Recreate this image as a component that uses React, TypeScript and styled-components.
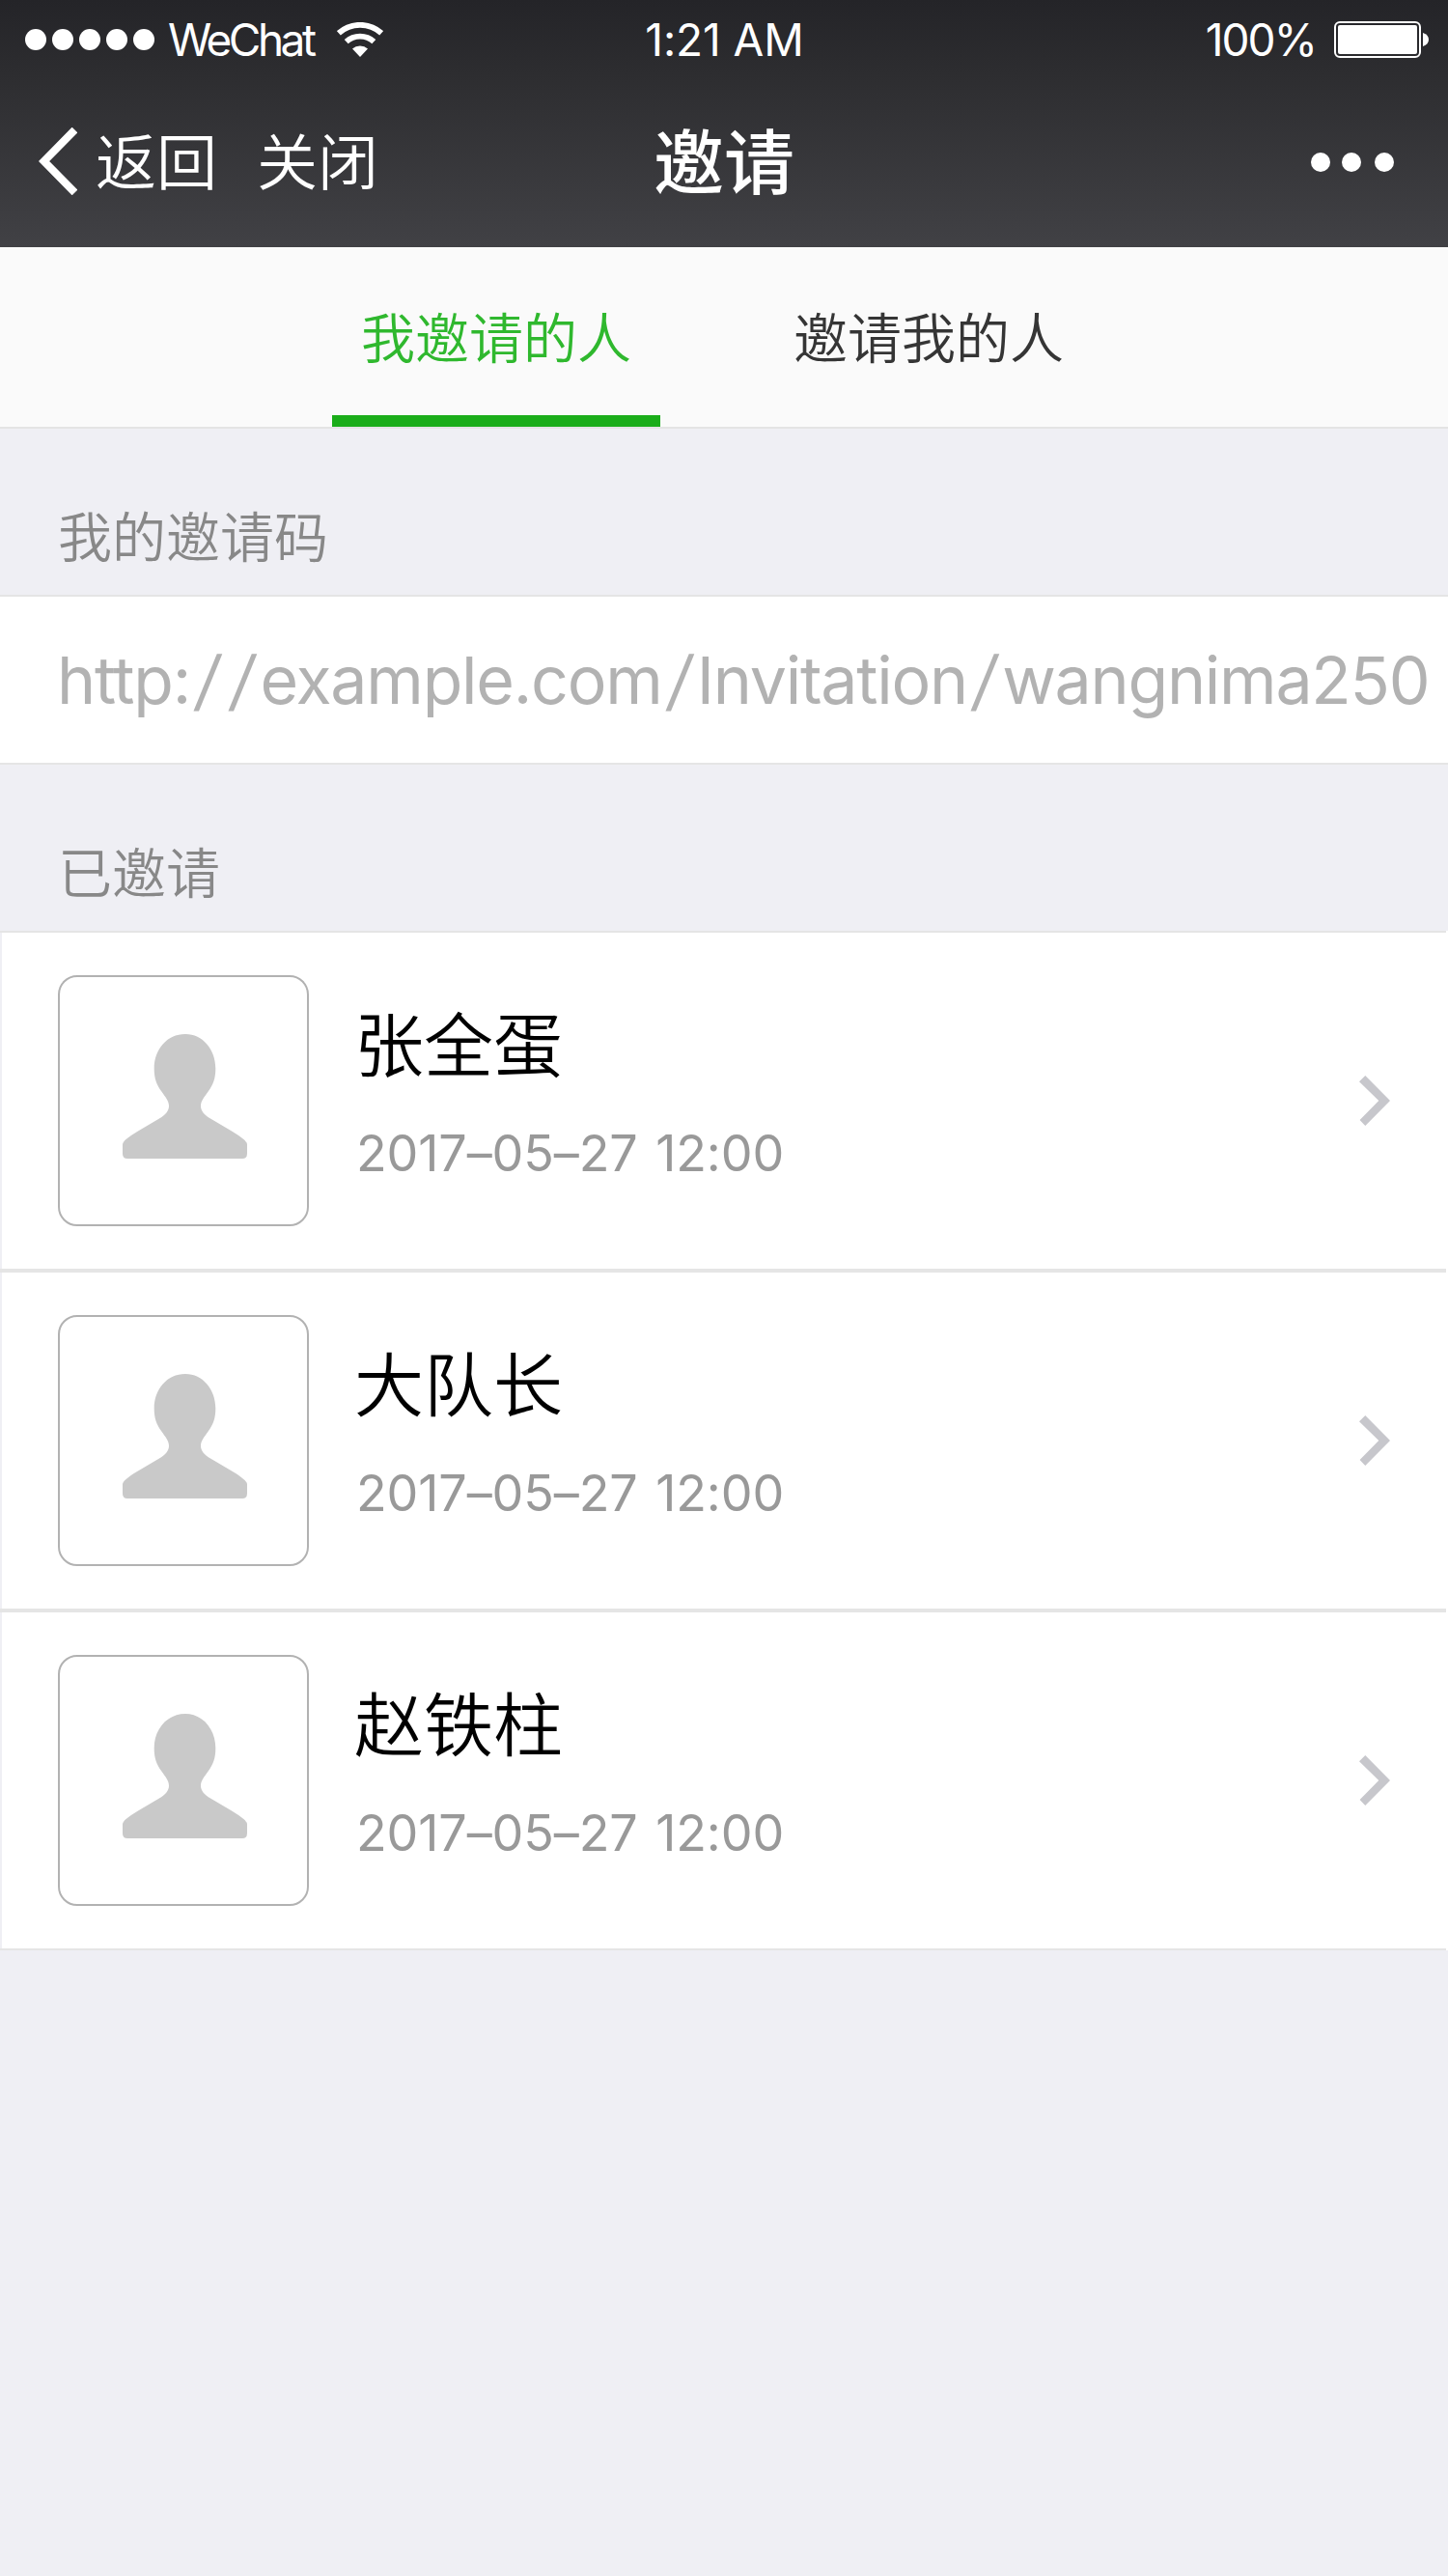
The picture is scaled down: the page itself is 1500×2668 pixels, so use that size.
import React from "react";
import styled, { createGlobalStyle } from "styled-components";

const latin = `Inter, "Noto Sans CJK SC", sans-serif`;
const cjk = `"Noto Sans CJK SC", sans-serif`;

const GlobalStyle = createGlobalStyle`
  *, *::before, *::after { box-sizing: border-box; }
  body { margin: 0; background: #efeff4; }
  h1, h2, p { margin: 0; font-weight: 400; }
  button { border: 0; padding: 0; background: none; font: inherit; color: inherit; }
  svg { display: block; flex: none; }
`;

const Page = styled.div`
  width: 1500px;
  min-height: 2668px;
  background: #efeff4;
  font-family: ${cjk};
  overflow: hidden;
`;

const Header = styled.header`
  height: 256px;
  background: linear-gradient(180deg, #242428 0%, #2d2d30 30%, #414145 100%);
  color: #fff;
`;

const StatusBar = styled.div`
  height: 82px;
  display: grid;
  grid-template-columns: 1fr auto 1fr;
  align-items: center;
  padding: 0 20px 0 26px;
  font-family: ${latin};
  font-size: 46px;
  line-height: 82px;
`;

const StatusLeft = styled.div`
  display: flex;
  align-items: center;
`;

const StatusRight = styled.div`
  display: flex;
  align-items: center;
  justify-content: flex-end;
`;

const Signal = styled.div`
  display: flex;
  gap: 6px;
  margin-right: 14px;
`;

const SignalDot = styled.i`
  width: 22px;
  height: 22px;
  border-radius: 50%;
  background: #fff;
`;

const StatusText = styled.span<{ $spacing: number; $gap?: number }>`
  letter-spacing: ${(p) => p.$spacing}px;
  margin-right: ${(p) => p.$gap ?? 0}px;
  font-weight: 400;
  white-space: nowrap;
`;

const NavBar = styled.nav`
  height: 174px;
  padding: 0 40px 4px;
  display: grid;
  grid-template-columns: 1fr auto 1fr;
  align-items: center;
`;

const NavActions = styled.div`
  display: flex;
  align-items: center;
`;

const NavButton = styled.button<{ $gap: number }>`
  margin-left: ${(p) => p.$gap}px;
  padding-bottom: 7px;
  font-size: 63px;
  line-height: 90px;
  font-weight: 350;
  white-space: nowrap;
`;

const Title = styled.h1`
  padding-bottom: 8px;
  font-size: 73px;
  line-height: 100px;
  font-weight: 500;
`;

const More = styled.button`
  display: flex;
  justify-content: flex-end;
  padding: 2px 16px 0 0;
`;

const MoreDot = styled.i<{ $gap?: number }>`
  width: 20px;
  height: 20px;
  margin-left: ${(p) => p.$gap ?? 0}px;
  border-radius: 50%;
  background: #fff;
`;

const Tabs = styled.div`
  height: 188px;
  display: flex;
  padding-left: 344px;
  gap: 108px;
  background: #fafafa;
  border-bottom: 2px solid #e4e4e4;
`;

const Tab = styled.button<{ $active?: boolean }>`
  width: 340px;
  height: 186px;
  padding-top: 7px;
  border-bottom: 12px solid ${(p) => (p.$active ? "#1aad19" : "transparent")};
  color: ${(p) => (p.$active ? "#2fb82e" : "#353535")};
  font-size: 56px;
  line-height: 84px;
  font-weight: 350;
  white-space: nowrap;
`;

const SectionLabel = styled.h2`
  height: 172px;
  padding: 67px 60px 0;
  font-size: 56px;
  line-height: 84px;
  font-weight: 350;
  color: #888;
`;

const CodeCell = styled.div`
  height: 176px;
  display: flex;
  align-items: center;
  padding-left: 59px;
  background: #fff;
  border-top: 2px solid #e5e5e5;
  border-bottom: 2px solid #e5e5e5;
`;

const CodeText = styled.span`
  font-family: ${latin};
  font-size: 68px;
  line-height: 96px;
  font-weight: 400;
  letter-spacing: -1.24px;
  color: #b2b2b2;
  white-space: nowrap;
`;

const Slash = styled.span`
  display: inline-block;
  padding: 0 6.5px;
  transform: skewX(-8deg);
`;

const List = styled.ul`
  list-style: none;
  margin: 0;
  padding: 0;
`;

const Row = styled.li`
  height: 352px;
  display: flex;
  align-items: center;
  padding: 0 60px;
  background:
    linear-gradient(#e5e5e5, #e5e5e5) 0 0 / 1498px 2px no-repeat,
    linear-gradient(#e5e5e5, #e5e5e5) 0 100% / 1498px 2px no-repeat,
    linear-gradient(#efeff4, #efeff4) 0 0 / 2px 100% no-repeat,
    #fff;
`;

const Avatar = styled.div`
  width: 260px;
  height: 260px;
  padding: 59px 0 0 65px;
  border: 2px solid #b2b2b2;
  border-radius: 20px;
`;

const Info = styled.div`
  flex: 1;
  margin-left: 47px;
  padding-bottom: 23px;
  display: flex;
  flex-direction: column;
`;

const Name = styled.p`
  font-size: 72px;
  line-height: 104px;
  font-weight: 350;
  color: #000;
`;

const DateText = styled.p`
  margin-top: 29px;
  padding-left: 2px;
  font-family: ${latin};
  font-size: 52px;
  line-height: 72px;
  font-weight: 400;
  letter-spacing: -0.1px;
  word-spacing: 4px;
  color: #999;
  white-space: nowrap;
`;

const Person = () => (
  <svg width="129" height="129" viewBox="0 0 129 129" fill="#c9c9c9">
    <path d="M65 0C83 0 96.300 16 96.300 35.500C96.300 46 94 52 89 59C84.500 65.500 81 69 81 74.500C81 80 85 84 91 87.500L113 100.500C123 106.500 129 111 129 114.500V124Q129 129 124 129H5Q0 129 0 124V114.500C0 111 6 106.500 16 100.500L38 87.500C44 84 48 80 48 74.500C48 69 44.500 65.500 40 59C35 52 32.700 46 32.700 35.500C32.700 16 46 0 65 0Z" />
  </svg>
);

const Wifi = () => (
  <svg width="48" height="36" viewBox="0 0 48 36" fill="none" stroke="#fff">
    <path d="M1.900 11.300A33 33 0 0 1 46.100 11.300" strokeWidth="5.800" />
    <path d="M9.700 20.200A21 21 0 0 1 38.300 20.200" strokeWidth="5.800" />
    <path d="M16 27.500A12 12 0 0 1 32 27.500L24 36Z" fill="#fff" stroke="none" />
  </svg>
);

const Battery = () => (
  <svg width="98" height="38" viewBox="0 0 98 38">
    <rect x="1" y="1" width="88" height="36" rx="5" fill="none" stroke="#fff" strokeWidth="2" />
    <rect x="4" y="4" width="82" height="30" rx="2" fill="#fff" />
    <path d="M92 12Q98 14 98 19T92 26Z" fill="#fff" />
  </svg>
);

const BackArrow = () => (
  <svg width="40" height="70" viewBox="0 0 40 70" fill="none" stroke="#fff" strokeWidth="8">
    <path d="M37.500 2.500L5.600 35L37.500 67.500" />
  </svg>
);

const Chevron = () => (
  <svg width="32" height="52" viewBox="0 0 32 52" fill="#c7c7cc">
    <path d="M0 6.300L6.300 0L32 26L6.300 52L0.600 46L20.300 26Z" />
  </svg>
);

const invited = [
  { name: "张全蛋", date: "2017–05–27 12:00" },
  { name: "大队长", date: "2017–05–27 12:00" },
  { name: "赵铁柱", date: "2017–05–27 12:00" },
];

export default function App() {
  return (
    <Page>
      <GlobalStyle />
      <Header>
        <StatusBar>
          <StatusLeft>
            <Signal>
              {[0, 1, 2, 3, 4].map((i) => (
                <SignalDot key={i} />
              ))}
            </Signal>
            <StatusText $spacing={-3.5} $gap={24}>WeChat</StatusText>
            <Wifi />
          </StatusLeft>
          <StatusText $spacing={-0.1} $gap={5}>1:21 AM</StatusText>
          <StatusRight>
            <StatusText $spacing={-1.9} $gap={19}>100%</StatusText>
            <Battery />
          </StatusRight>
        </StatusBar>
        <NavBar>
          <NavActions>
            <BackArrow />
            <NavButton $gap={19}>返回</NavButton>
            <NavButton $gap={41}>关闭</NavButton>
          </NavActions>
          <Title>邀请</Title>
          <More aria-label="更多">
            <MoreDot />
            <MoreDot $gap={12} />
            <MoreDot $gap={14} />
          </More>
        </NavBar>
      </Header>
      <Tabs>
        <Tab $active>我邀请的人</Tab>
        <Tab>邀请我的人</Tab>
      </Tabs>
      <SectionLabel>我的邀请码</SectionLabel>
      <CodeCell>
        <CodeText>
          http:<Slash>/</Slash><Slash>/</Slash>example.com<Slash>/</Slash>Invitation<Slash>/</Slash>wangnima250
        </CodeText>
      </CodeCell>
      <SectionLabel>已邀请</SectionLabel>
      <List>
        {invited.map((p) => (
          <Row key={p.name}>
            <Avatar>
              <Person />
            </Avatar>
            <Info>
              <Name>{p.name}</Name>
              <DateText>{p.date}</DateText>
            </Info>
            <Chevron />
          </Row>
        ))}
      </List>
    </Page>
  );
}
